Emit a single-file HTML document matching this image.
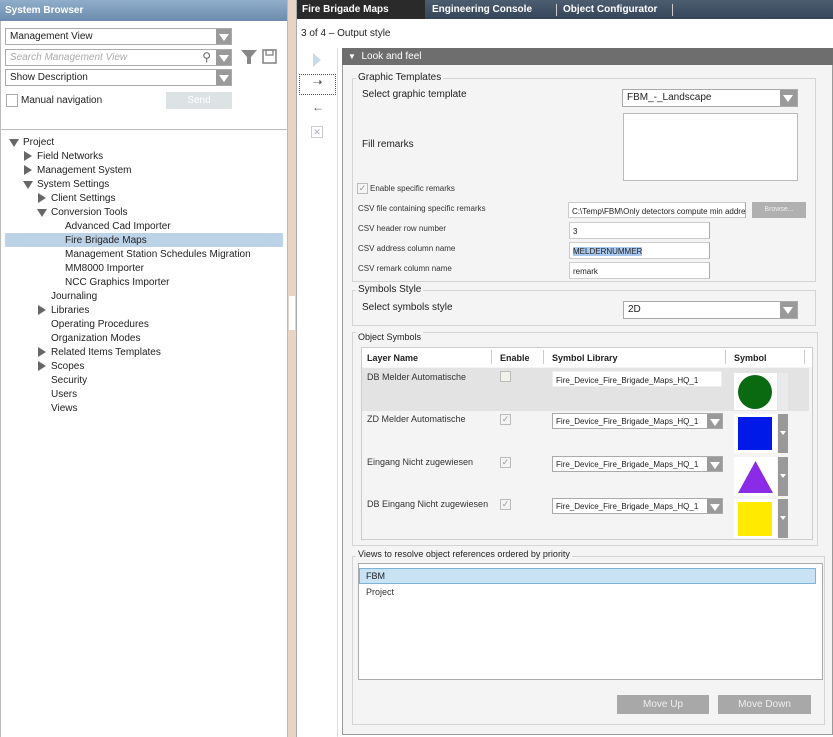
<!DOCTYPE html>
<html><head><meta charset="utf-8"><style>
*{box-sizing:border-box;margin:0;padding:0}
body{width:833px;height:737px;overflow:hidden;background:#fff;font-family:"Liberation Sans",sans-serif;font-size:10px;color:#222;position:relative}
.a{position:absolute}
.dd{position:absolute;background:#fff;border:1px solid #aaa;font-size:10px;padding:2px 4px;white-space:nowrap;overflow:hidden}
.dd .b{position:absolute;right:0;top:0;bottom:0;width:15px;background:#9a9a9a}
.dd .b:after{content:"";position:absolute;left:3px;top:5px;border-left:5px solid transparent;border-right:5px solid transparent;border-top:7px solid #fff}
.tri-r{position:absolute;width:0;height:0;border-top:5px solid transparent;border-bottom:5px solid transparent;border-left:8px solid #666}
.tri-d{position:absolute;width:0;height:0;border-left:5px solid transparent;border-right:5px solid transparent;border-top:8px solid #666}
.tr{position:absolute;font-size:10px;white-space:nowrap}
.fs{position:absolute;border:1px solid #d4d4d4}
.lg{position:absolute;background:#f4f4f4;padding:0 2px;font-size:10px;color:#222}
.inp{position:absolute;background:#fff;border:1px solid #ccc;border-right-color:#aaa;font-size:8px;padding:4px 3px;white-space:nowrap;overflow:hidden}
.sm{position:absolute;font-size:8px;color:#333;white-space:nowrap}
.cb{position:absolute;width:11px;height:11px;border:1px solid #bbb;background:#f4f4f4;font-size:9px;color:#999;line-height:9px;text-align:center}
.btn{position:absolute;background:#a8a8a8;color:#eee;font-size:10px;text-align:center}
.strip{position:absolute;width:10px;height:39px;background:#999}
.strip:after{content:"";position:absolute;left:2px;top:17px;border-left:3px solid transparent;border-right:3px solid transparent;border-top:4px solid #fff}
</style></head><body>
<div class="a" style="left:0;top:0;width:288px;height:21px;background:linear-gradient(#90aecb,#6c8cad);color:#fff;font-weight:bold;font-size:10px;padding:5px 5px">System Browser</div>
<div class="a" style="left:0;top:21px;width:1px;height:716px;background:#bbb"></div>
<div class="a" style="left:287px;top:0;width:1px;height:737px;background:#bbb"></div>
<div class="dd" style="left:5px;top:28px;width:227px;height:17px">Management View<div class="b"></div></div>
<div class="dd" style="left:5px;top:49px;width:227px;height:17px;color:#aaa;font-style:italic">Search Management View<span class="a" style="right:20px;top:0;color:#666;font-style:normal;font-size:12px">&#9906;</span><div class="b"></div></div>
<svg class="a" style="left:241px;top:50px" width="16" height="14"><path d="M0 0H16L10 7V14H6V7Z" fill="#888"/></svg>
<svg class="a" style="left:262px;top:49px" width="15" height="15"><rect x="1" y="1" width="13" height="13" fill="none" stroke="#888" stroke-width="1.6"/><rect x="4" y="1" width="7" height="5" fill="none" stroke="#888" stroke-width="1.4"/></svg>
<div class="dd" style="left:5px;top:69px;width:227px;height:17px">Show Description<div class="b"></div></div>
<div class="a" style="left:6px;top:94px;width:12px;height:13px;border:1px solid #aaa;background:#fff"></div>
<div class="tr" style="left:21px;top:95px">Manual navigation</div>
<div class="a" style="left:166px;top:92px;width:66px;height:17px;background:#dde2e5;color:#fff;text-align:center;padding-top:3px">Send</div>
<div class="a" style="left:1px;top:129px;width:286px;height:1px;background:#bbb"></div>
<div class="a" style="left:5px;top:233px;width:278px;height:14px;background:#bcd2e7"></div>
<div class="tri-d" style="left:9px;top:139px"></div><div class="tr" style="left:23px;top:137px">Project</div>
<div class="tri-r" style="left:24px;top:151px"></div><div class="tr" style="left:37px;top:151px">Field Networks</div>
<div class="tri-r" style="left:24px;top:165px"></div><div class="tr" style="left:37px;top:165px">Management System</div>
<div class="tri-d" style="left:23px;top:181px"></div><div class="tr" style="left:37px;top:179px">System Settings</div>
<div class="tri-r" style="left:38px;top:193px"></div><div class="tr" style="left:51px;top:193px">Client Settings</div>
<div class="tri-d" style="left:37px;top:209px"></div><div class="tr" style="left:51px;top:207px">Conversion Tools</div>
<div class="tr" style="left:65px;top:221px">Advanced Cad Importer</div>
<div class="tr" style="left:65px;top:235px">Fire Brigade Maps</div>
<div class="tr" style="left:65px;top:249px">Management Station Schedules Migration</div>
<div class="tr" style="left:65px;top:263px">MM8000 Importer</div>
<div class="tr" style="left:65px;top:277px">NCC Graphics Importer</div>
<div class="tr" style="left:51px;top:291px">Journaling</div>
<div class="tri-r" style="left:38px;top:305px"></div><div class="tr" style="left:51px;top:305px">Libraries</div>
<div class="tr" style="left:51px;top:319px">Operating Procedures</div>
<div class="tr" style="left:51px;top:333px">Organization Modes</div>
<div class="tri-r" style="left:38px;top:347px"></div><div class="tr" style="left:51px;top:347px">Related Items Templates</div>
<div class="tri-r" style="left:38px;top:361px"></div><div class="tr" style="left:51px;top:361px">Scopes</div>
<div class="tr" style="left:51px;top:375px">Security</div>
<div class="tr" style="left:51px;top:389px">Users</div>
<div class="tr" style="left:51px;top:403px">Views</div>
<div class="a" style="left:288px;top:0;width:8px;height:737px;background:#e8d4c4"></div>
<div class="a" style="left:289px;top:296px;width:6px;height:34px;background:#fff"></div>
<div class="a" style="left:296px;top:0;width:1px;height:737px;background:#aaa"></div>
<div class="a" style="left:297px;top:0;width:536px;height:19px;background:linear-gradient(#4c5d70,#36465a)"></div>
<div class="a" style="left:297px;top:0;width:128px;height:19px;background:#2a2a2a;color:#fff;font-weight:bold;padding:4px 5px">Fire Brigade Maps</div>
<div class="a" style="left:432px;top:4px;color:#fff;font-weight:bold">Engineering Console</div>
<div class="a" style="left:556px;top:4px;width:1px;height:12px;background:#ccc"></div>
<div class="a" style="left:563px;top:4px;color:#fff;font-weight:bold">Object Configurator</div>
<div class="a" style="left:672px;top:4px;width:1px;height:12px;background:#ccc"></div>
<div class="a" style="left:297px;top:19px;width:536px;height:718px;background:#fff"></div>
<div class="tr" style="left:301px;top:28px">3 of 4 – Output style</div>
<div class="a" style="left:313px;top:53px;border-top:7px solid transparent;border-bottom:7px solid transparent;border-left:8px solid #c8dbe8"></div>
<div class="a" style="left:299px;top:74px;width:37px;height:21px;border:1px dotted #555;font-size:12px;text-align:center;color:#555">&#10141;</div>
<div class="a" style="left:312px;top:100px;font-size:12px;color:#555">&#8592;</div>
<div class="a" style="left:311px;top:126px;width:12px;height:12px;border:1px solid #ccc;color:#aac;font-size:9px;text-align:center;line-height:10px">✕</div>
<div class="a" style="left:337px;top:48px;width:1px;height:689px;background:#ddd"></div>
<div class="a" style="left:342px;top:48px;width:491px;height:687px;background:#f4f4f4;border:1px solid #999"></div>
<div class="a" style="left:342px;top:48px;width:491px;height:17px;background:#6e6e6e;color:#fff;padding:3px 6px"><span style="font-size:8px">▼</span>&nbsp; Look and feel</div>
<div class="fs" style="left:352px;top:78px;width:464px;height:204px"></div>
<div class="lg" style="left:356px;top:72px">Graphic Templates</div>
<div class="tr" style="left:362px;top:89px">Select graphic template</div>
<div class="dd" style="left:622px;top:89px;width:176px;height:18px">FBM_-_Landscape<div class="b" style="width:17px"></div></div>
<div class="a" style="left:623px;top:113px;width:175px;height:68px;background:#fff;border:1px solid #bbb"></div>
<div class="tr" style="left:362px;top:139px">Fill remarks</div>
<div class="cb" style="left:357px;top:183px">✓</div><div class="sm" style="left:370px;top:184px">Enable specific remarks</div>
<div class="sm" style="left:358px;top:204px">CSV file containing specific remarks</div>
<div class="inp" style="left:568px;top:202px;width:178px;height:16px">C:\Temp\FBM\Only detectors compute min addres</div>
<div class="btn" style="left:752px;top:202px;width:54px;height:16px;font-size:7px;padding-top:4px;background:#b0b0b0">Browse...</div>
<div class="sm" style="left:358px;top:224px">CSV header row number</div>
<div class="inp" style="left:569px;top:222px;width:141px;height:17px">3</div>
<div class="sm" style="left:358px;top:244px">CSV address column name</div>
<div class="inp" style="left:569px;top:242px;width:141px;height:17px"><span style="background:#a8c8ee">MELDERNUMMER</span></div>
<div class="sm" style="left:358px;top:264px">CSV remark column name</div>
<div class="inp" style="left:569px;top:262px;width:141px;height:17px">remark</div>
<div class="fs" style="left:352px;top:290px;width:464px;height:36px"></div>
<div class="lg" style="left:356px;top:284px">Symbols Style</div>
<div class="tr" style="left:362px;top:302px">Select symbols style</div>
<div class="dd" style="left:623px;top:301px;width:175px;height:18px">2D<div class="b" style="width:17px"></div></div>
<div class="fs" style="left:352px;top:332px;width:466px;height:214px"></div>
<div class="lg" style="left:356px;top:332px;font-size:9px">Object Symbols</div>
<div class="a" style="left:361px;top:347px;width:452px;height:193px;background:#f4f4f4;border:1px solid #ccc"></div>
<div class="a" style="left:362px;top:348px;width:450px;height:19px;background:#fff;font-weight:bold;font-size:9px">
<span class="a" style="left:5px;top:5px">Layer Name</span><span class="a" style="left:129px;top:2px;width:1px;height:14px;background:#ccc"></span>
<span class="a" style="left:138px;top:5px">Enable</span><span class="a" style="left:181px;top:2px;width:1px;height:14px;background:#ccc"></span>
<span class="a" style="left:190px;top:5px">Symbol Library</span><span class="a" style="left:363px;top:2px;width:1px;height:14px;background:#ccc"></span>
<span class="a" style="left:372px;top:5px">Symbol</span><span class="a" style="left:442px;top:2px;width:1px;height:14px;background:#ccc"></span></div>
<div class="a" style="left:362px;top:368px;width:447px;height:43px;background:#e3e3e3"></div>
<div class="sm" style="left:367px;top:372px;font-size:9px">DB Melder Automatische</div>
<div class="cb" style="left:500px;top:371px;background:#f2f2ea"></div>
<div class="inp" style="left:552px;top:371px;width:170px;height:16px;border-color:#eee">Fire_Device_Fire_Brigade_Maps_HQ_1</div>
<div class="a" style="left:734px;top:373px;width:43px;height:37px;background:#fff"><div class="a" style="left:4px;top:2px;width:34px;height:34px;border-radius:50%;background:#0a6a12"></div></div>
<div class="a" style="left:778px;top:373px;width:10px;height:37px;background:#e8eaec"></div>
<div class="sm" style="left:367px;top:414px;font-size:9px">ZD Melder Automatische</div>
<div class="cb" style="left:500px;top:414px">✓</div>
<div class="dd" style="left:552px;top:413px;width:171px;height:16px;font-size:8px;padding:3px">Fire_Device_Fire_Brigade_Maps_HQ_1<div class="b"></div></div>
<div class="a" style="left:734px;top:414px;width:43px;height:39px;background:#fff"><div class="a" style="left:4px;top:3px;width:34px;height:33px;background:#0018e8"></div></div>
<div class="strip" style="left:778px;top:414px"></div>
<div class="sm" style="left:367px;top:457px;font-size:9px">Eingang Nicht zugewiesen</div>
<div class="cb" style="left:500px;top:457px">✓</div>
<div class="dd" style="left:552px;top:456px;width:171px;height:16px;font-size:8px;padding:3px">Fire_Device_Fire_Brigade_Maps_HQ_1<div class="b"></div></div>
<div class="a" style="left:734px;top:457px;width:43px;height:39px;background:#fff"><svg class="a" style="left:4px;top:3px" width="35" height="33"><path d="M17.5 1L35 33H0Z" fill="#8a2be8"/></svg></div>
<div class="strip" style="left:778px;top:457px"></div>
<div class="sm" style="left:367px;top:499px;font-size:9px">DB Eingang Nicht zugewiesen</div>
<div class="cb" style="left:500px;top:499px">✓</div>
<div class="dd" style="left:552px;top:498px;width:171px;height:16px;font-size:8px;padding:3px">Fire_Device_Fire_Brigade_Maps_HQ_1<div class="b"></div></div>
<div class="a" style="left:734px;top:499px;width:43px;height:39px;background:#fff"><div class="a" style="left:4px;top:3px;width:34px;height:34px;background:#ffea00"></div></div>
<div class="strip" style="left:778px;top:499px"></div>
<div class="fs" style="left:352px;top:556px;width:473px;height:169px"></div>
<div class="lg" style="left:356px;top:549px;font-size:9px">Views to resolve object references ordered by priority</div>
<div class="a" style="left:358px;top:563px;width:465px;height:117px;background:#fff;border:1px solid #aaa"></div>
<div class="a" style="left:359px;top:568px;width:457px;height:16px;background:#c7e3f4;border:1px solid #7fb3d6;font-size:9px;padding:2px 6px">FBM</div>
<div class="sm" style="left:366px;top:587px;font-size:9px">Project</div>
<div class="btn" style="left:617px;top:695px;width:92px;height:19px;padding-top:4px">Move Up</div>
<div class="btn" style="left:718px;top:695px;width:93px;height:19px;padding-top:4px">Move Down</div>
</body></html>
